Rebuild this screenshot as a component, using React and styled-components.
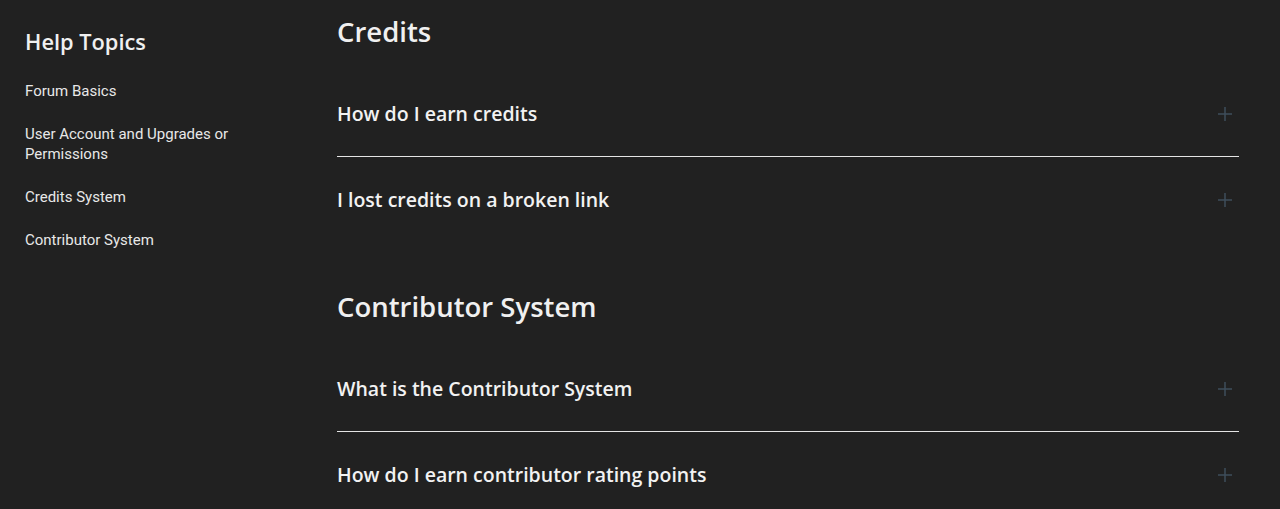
import React from 'react'
import styled, { createGlobalStyle } from 'styled-components'

const GlobalStyle = createGlobalStyle`
  html, body {
    margin: 0;
    padding: 0;
    background: #212121;
  }
  body {
    font-family: 'Open Sans', 'Liberation Sans', sans-serif;
    color: #f2f2f2;
  }
`

const topics = [
  'Forum Basics',
  'User Account and Upgrades or Permissions',
  'Credits System',
  'Contributor System',
]

const sections = [
  {
    title: 'Credits',
    questions: ['How do I earn credits', 'I lost credits on a broken link'],
  },
  {
    title: 'Contributor System',
    questions: ['What is the Contributor System', 'How do I earn contributor rating points'],
  },
]

const App = () => {
  return (
    <>
      <GlobalStyle />
      <Page>
        <Sidebar>
          <SideTitle>Help Topics</SideTitle>
          <TopicList>
            {topics.map((t) => (
              <Topic key={t}>{t}</Topic>
            ))}
          </TopicList>
        </Sidebar>
        <Main>
          {sections.map((s) => (
            <Section key={s.title}>
              <SectionTitle>{s.title}</SectionTitle>
              {s.questions.map((q) => (
                <Item key={q}>
                  <Question>{q}</Question>
                  <PlusIcon />
                </Item>
              ))}
            </Section>
          ))}
        </Main>
      </Page>
    </>
  )
}

const PlusIcon = () => (
  <Plus width="16" height="16" viewBox="0 0 16 16">
    <path d="M8 1v14M1 8h14" stroke="currentColor" strokeWidth="1.5" fill="none" />
  </Plus>
)

const Page = styled.div`
  display: grid;
  grid-template-columns: 312px 1fr;
  padding: 13px 41px 0 25px;
  min-height: 509px;
  box-sizing: border-box;
`

const Sidebar = styled.aside`
  padding-top: 13px;
`

const SideTitle = styled.h3`
  margin: 0 0 23px;
  font-size: 21.8px;
  line-height: 32px;
  font-weight: 600;
  color: #f0f0f0;
`

const TopicList = styled.ul`
  list-style: none;
  margin: 0;
  padding: 0;
  display: flex;
  flex-direction: column;
  gap: 23px;
  max-width: 240px;
`

const Topic = styled.li`
  font-family: Roboto, 'Liberation Sans', sans-serif;
  font-size: 15px;
  line-height: 20px;
  color: #e8e8e8;
  cursor: pointer;
`

const Main = styled.main`
  display: flex;
  flex-direction: column;
  gap: 45px;
`

const Section = styled.section``

const SectionTitle = styled.h2`
  margin: 0 0 20px;
  font-size: 27.5px;
  line-height: 38px;
  font-weight: 600;
  color: #f0f0f0;
`

const Item = styled.div`
  display: flex;
  align-items: center;
  justify-content: space-between;
  padding: 32px 0 31px;
  border-bottom: 1px solid #e4e4e4;
  &:last-child {
    border-bottom-color: transparent;
  }
`

const Question = styled.h4`
  margin: 0;
  font-size: 19.5px;
  line-height: 22px;
  font-weight: 600;
  color: #f2f2f2;
`

const Plus = styled.svg`
  color: #3e4d5b;
  margin-right: 6px;
  flex-shrink: 0;
`

export default App
